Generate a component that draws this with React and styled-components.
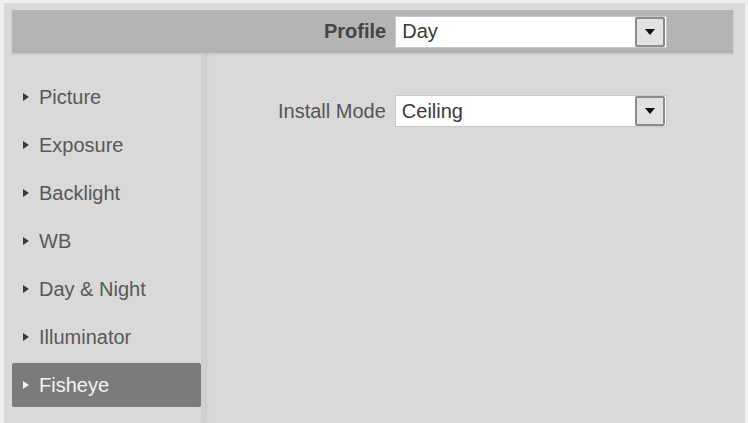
import React from 'react';
import styled, { createGlobalStyle } from 'styled-components';

const GlobalStyle = createGlobalStyle`
  html, body {
    margin: 0;
    padding: 0;
    background: #eeeeee;
    font-family: 'Liberation Sans', Arial, sans-serif;
  }
`;

const Page = styled.div`
  width: 748px;
  height: 423px;
  box-sizing: border-box;
  padding: 3px 3px 0 4px;
  overflow: hidden;
`;

const Panel = styled.div`
  height: 100%;
  box-sizing: border-box;
  background: #d9d9d9;
  padding: 7px 12px 0 8px;
  display: flex;
  flex-direction: column;
`;

const HeaderBar = styled.div`
  height: 43px;
  flex-shrink: 0;
  background: #b4b4b4;
  display: flex;
  align-items: center;
  padding-left: 312px;
  box-shadow: 0 1px 2px rgba(0, 0, 0, 0.12);
`;

const Body = styled.div`
  flex: 1;
  display: flex;
`;

const Sidebar = styled.ul`
  list-style: none;
  margin: 0;
  width: 189px;
  padding: 22px 0 0;
  display: flex;
  flex-direction: column;
  gap: 4px;
  border-right: 4px solid #d0d0d0;
  box-shadow: 2px 0 3px rgba(0, 0, 0, 0.06);
`;

const NavItem = styled.li`
  height: 44px;
  display: flex;
  align-items: center;
  gap: 10px;
  padding-left: 11px;
  border-radius: 2px;
  font-size: 20px;
  color: ${(p) => (p.$active ? '#f4f4f4' : '#585858')};
  background: ${(p) => (p.$active ? '#7b7b7b' : 'transparent')};
`;

const Arrow = styled.span`
  width: 0;
  height: 0;
  border-top: 4.5px solid transparent;
  border-bottom: 4.5px solid transparent;
  border-left: 6px solid ${(p) => (p.$active ? '#f4f4f4' : '#3a3a3a')};
`;

const Content = styled.div`
  flex: 1;
  padding: 42px 0 0 73px;
`;

const FieldRow = styled.div`
  display: flex;
  align-items: center;
  gap: 9px;
`;

const Label = styled.span`
  font-size: 20px;
  color: ${(p) => (p.$dark ? '#454545' : '#555555')};
  font-weight: ${(p) => (p.$bold ? 700 : 400)};
`;

const Select = styled.div`
  width: 272px;
  height: 32px;
  box-sizing: border-box;
  background: #ffffff;
  border: 1px solid #c8c8c8;
  display: flex;
  align-items: center;
  padding: 0 1px 0 6px;
  font-size: 20px;
  color: #3a3a3a;
`;

const SelectText = styled.span`
  flex: 1;
`;

const DropButton = styled.span`
  width: 30px;
  height: 30px;
  box-sizing: border-box;
  border: 2px solid #8c8c8c;
  border-radius: 2px;
  background: #e2e2e2;
  display: flex;
  align-items: center;
  justify-content: center;

  &::after {
    content: '';
    border-left: 5px solid transparent;
    border-right: 5px solid transparent;
    border-top: 6px solid #111111;
  }
`;

const menu = ['Picture', 'Exposure', 'Backlight', 'WB', 'Day & Night', 'Illuminator', 'Fisheye'];

export default function App() {
  return (
    <Page>
      <GlobalStyle />
      <Panel>
        <HeaderBar>
          <FieldRow>
            <Label $dark $bold>Profile</Label>
            <Select>
              <SelectText>Day</SelectText>
              <DropButton />
            </Select>
          </FieldRow>
        </HeaderBar>
        <Body>
          <Sidebar>
            {menu.map((item) => (
              <NavItem key={item} $active={item === 'Fisheye'}>
                <Arrow $active={item === 'Fisheye'} />
                {item}
              </NavItem>
            ))}
          </Sidebar>
          <Content>
            <FieldRow>
              <Label>Install Mode</Label>
              <Select>
                <SelectText>Ceiling</SelectText>
                <DropButton />
              </Select>
            </FieldRow>
          </Content>
        </Body>
      </Panel>
    </Page>
  );
}
